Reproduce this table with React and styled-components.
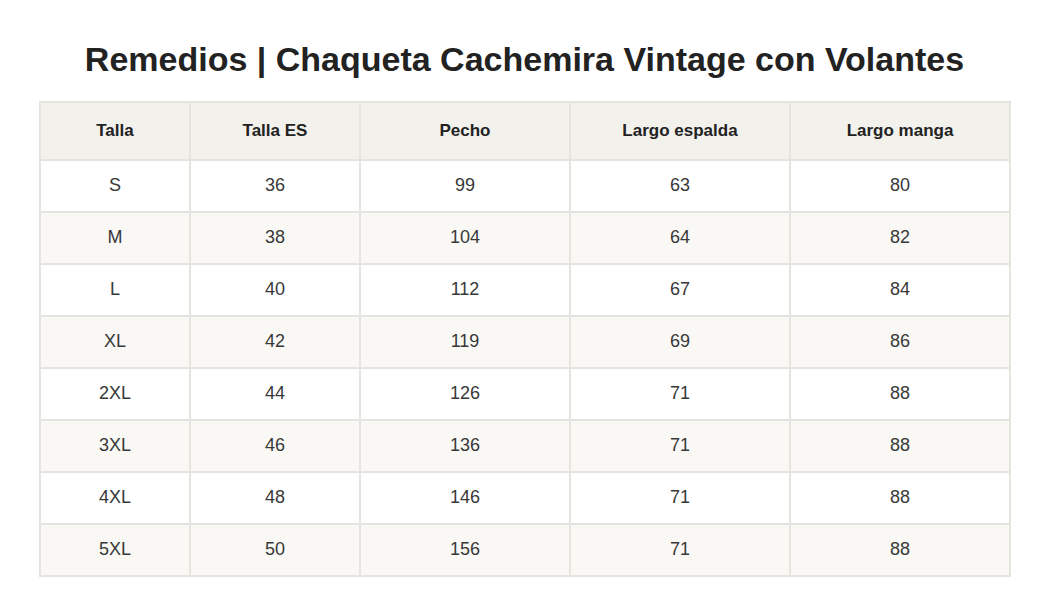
import React from 'react'
import styled, { createGlobalStyle } from 'styled-components'

const Global = createGlobalStyle`
  body {
    margin: 0;
    background: #fff;
    font-family: "Liberation Sans", Arial, sans-serif;
  }
`

const Page = styled.div`
  padding: 39px 40px 0 39px;
`

const Title = styled.h1`
  margin: 0 0 21px;
  text-align: center;
  font-size: 34px;
  line-height: 41px;
  font-weight: 700;
  color: #222;
`

const Table = styled.table`
  width: 971px;
  border-collapse: collapse;
  table-layout: fixed;
  border: 2px solid #e6e4de;
`

const Th = styled.th`
  height: 56px;
  padding: 0;
  background: #f2f1ec;
  border: 2px solid #e6e4de;
  font-size: 17px;
  font-weight: 700;
  color: #222;
  text-align: center;
`

const Row = styled.tr`
  background: ${(p) => (p.$alt ? '#f9f8f5' : '#fff')};
`

const Td = styled.td`
  height: 48px;
  padding: 0 0 2px;
  border: 2px solid #e6e4de;
  font-size: 18px;
  color: #383838;
  text-align: center;
`

const columns = [
  { label: 'Talla', width: 150 },
  { label: 'Talla ES', width: 170 },
  { label: 'Pecho', width: 210 },
  { label: 'Largo espalda', width: 220 },
  { label: 'Largo manga', width: 220 },
]

const rows = [
  ['S', 36, 99, 63, 80],
  ['M', 38, 104, 64, 82],
  ['L', 40, 112, 67, 84],
  ['XL', 42, 119, 69, 86],
  ['2XL', 44, 126, 71, 88],
  ['3XL', 46, 136, 71, 88],
  ['4XL', 48, 146, 71, 88],
  ['5XL', 50, 156, 71, 88],
]

export default function App() {
  return (
    <Page>
      <Global />
      <Title>Remedios | Chaqueta Cachemira Vintage con Volantes</Title>
      <Table>
        <colgroup>
          {columns.map((c) => (
            <col key={c.label} style={{ width: c.width }} />
          ))}
        </colgroup>
        <thead>
          <tr>
            {columns.map((c) => (
              <Th key={c.label}>{c.label}</Th>
            ))}
          </tr>
        </thead>
        <tbody>
          {rows.map((r, i) => (
            <Row key={r[0]} $alt={i % 2 === 1}>
              {r.map((v, j) => (
                <Td key={j}>{v}</Td>
              ))}
            </Row>
          ))}
        </tbody>
      </Table>
    </Page>
  )
}
